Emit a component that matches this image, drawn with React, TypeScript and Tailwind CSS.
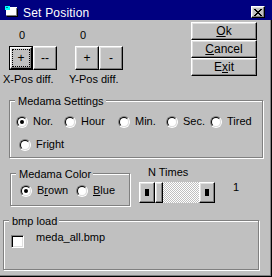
import React from "react";

type Kids = { className?: string; children?: React.ReactNode };

// classic raised 3d button face
function Raised({ className = "", children }: Kids) {
  return (
    <div
      className={`flex items-center justify-center bg-[#c0c0c0] border border-t-white border-l-white border-r-black border-b-black shadow-[inset_-1px_-1px_0_#808080,inset_1px_1px_0_#dfdfdf] ${className}`}
    >
      {children}
    </div>
  );
}

function Radio({ checked = false }: { checked?: boolean }) {
  return (
    <div className="mt-[1px] w-[12px] h-[12px] shrink-0 rounded-full border border-t-[#808080] border-l-[#808080] border-r-white border-b-white flex">
      <div className="flex-1 rounded-full border border-t-black border-l-black border-r-[#dfdfdf] border-b-[#dfdfdf] bg-white flex items-center justify-center">
        {checked && <div className="w-[4px] h-[4px] rounded-full bg-black" />}
      </div>
    </div>
  );
}

function Option({ label, checked, className = "" }: { label: React.ReactNode; checked?: boolean; className?: string }) {
  return (
    <div className={`flex items-start gap-[5px] h-[13px] ${className}`}>
      <Radio checked={checked} />
      <span>{label}</span>
    </div>
  );
}

function Group({ title, className = "", children }: Kids & { title: string }) {
  return (
    <div className={`relative border border-[#808080] shadow-[1px_1px_0_#fff,inset_1px_1px_0_#fff] ${className}`}>
      <span className="absolute left-[5px] top-[-6px] pl-[3px] pr-[2px] bg-[#c0c0c0]">{title}</span>
      {children}
    </div>
  );
}

function Arrow({ dir }: { dir: "left" | "right" }) {
  const rows = [0, 1, 2, 3];
  return (
    <svg width="4" height="7" viewBox="0 0 4 7" shapeRendering="crispEdges">
      {rows.map((i) => (
        <rect
          key={i}
          x={dir === "left" ? 3 - i : 0}
          y={3 - i}
          width={i + 1}
          height={2 * i + 1}
          fill="#000"
        />
      ))}
    </svg>
  );
}

function CloseGlyph() {
  const px = [
    "XX....XX",
    ".XX..XX.",
    "..XXXX..",
    "...XX...",
    "..XXXX..",
    ".XX..XX.",
    "XX....XX",
  ];
  return (
    <svg width="8" height="7" viewBox="0 0 8 7" shapeRendering="crispEdges">
      {px.flatMap((row, y) =>
        row.split("").map((c, x) => (c === "X" ? <rect key={`${x}-${y}`} x={x} y={y} width="1" height="1" fill="#000" /> : null))
      )}
    </svg>
  );
}

function TitleIcon() {
  return (
    <svg width="13" height="11" viewBox="0 0 13 11" shapeRendering="crispEdges" className="ml-[5px] mt-[6px] shrink-0">
      <rect x="1" y="1" width="11" height="9" fill="#fff" />
      <rect x="1" y="9" width="11" height="1" fill="#808080" />
      <rect x="11" y="2" width="1" height="8" fill="#808080" />
      <rect x="12" y="3" width="1" height="8" fill="#000" />
      <rect x="2" y="10" width="11" height="1" fill="#000" />
      <rect x="0" y="0" width="5" height="4" fill="#00ffff" />
      <rect x="1" y="1" width="2" height="1" fill="#008080" />
    </svg>
  );
}

export default function App() {
  return (
    <div className="w-[272px] h-[277px] bg-[#c0c0c0] flex flex-col text-[11px] leading-[13px] text-black font-['Liberation_Sans',Arial,sans-serif] shadow-[inset_-1px_-1px_0_#000,inset_-2px_-2px_0_#808080] overflow-hidden">
      {/* title bar */}
      <div className="h-[20px] bg-[#000080] flex items-start shrink-0">
        <TitleIcon />
        <span className="ml-[5px] mt-[6px] text-white text-[12px] leading-[14px] tracking-[0.2px]">Set Position</span>
        <Raised className="ml-auto mr-[7px] mt-[6px] w-[14px] h-[12px]">
          <CloseGlyph />
        </Raised>
      </div>

      {/* counters + dialog buttons */}
      <div className="flex">
        <div className="w-[191px]">
          <div className="flex mt-[9px] h-[13px]">
            <span className="ml-[19px] w-[61px]">0</span>
            <span>0</span>
          </div>
          <div className="flex mt-[4px] ml-[9px] text-[12px]">
            <div className="w-[24px] h-[24px] border border-black flex">
              <Raised className="flex-1 relative">
                <span className="absolute inset-[1px] border border-dotted border-black" />
                +
              </Raised>
            </div>
            <Raised className="w-[24px] h-[24px]">--</Raised>
            <Raised className="w-[24px] h-[24px] ml-[18px]">+</Raised>
            <Raised className="w-[24px] h-[24px]">-</Raised>
          </div>
          <div className="flex mt-[3px]">
            <span className="ml-[3px] w-[66px]">X-Pos diff.</span>
            <span>Y-Pos diff.</span>
          </div>
        </div>
        <div className="mt-[2px] w-[66px] flex flex-col text-[12px] leading-[14px]">
          <Raised className="h-[18px]">
            <span className="underline underline-offset-[1px]">O</span>k
          </Raised>
          <Raised className="h-[18px]">
            <span className="underline underline-offset-[1px]">C</span>ancel
          </Raised>
          <Raised className="h-[18px]">
            E<span className="underline underline-offset-[1px]">x</span>it
          </Raised>
        </div>
      </div>

      {/* medama settings */}
      <Group title="Medama Settings" className="ml-[9px] mt-[14px] w-[254px] h-[58px] shrink-0">
        <div className="flex mt-[14px] ml-[6px]">
          <Option label="Nor." checked className="w-[48px]" />
          <Option label="Hour" className="w-[54px]" />
          <Option label="Min." className="w-[48px]" />
          <Option label="Sec." className="w-[44px]" />
          <Option label="Tired" />
        </div>
        <div className="flex mt-[10px] ml-[9px]">
          <Option label="Fright" />
        </div>
      </Group>

      {/* color + n times */}
      <div className="flex items-start">
        <Group title="Medama Color" className="ml-[10px] mt-[15px] w-[120px] h-[33px] shrink-0">
          <div className="flex mt-[10px] ml-[9px]">
            <Option
              checked
              className="w-[56px]"
              label={
                <>
                  B<span className="underline underline-offset-[1px]">r</span>own
                </>
              }
            />
            <Option
              label={
                <>
                  <span className="underline underline-offset-[1px]">B</span>lue
                </>
              }
            />
          </div>
        </Group>
        <div className="ml-[9px] flex flex-col">
          <span className="ml-[9px] mt-[8px]">N Times</span>
          <div className="flex items-start mt-[3px]">
            <div className="flex h-[21px] w-[76px]">
              <Raised className="w-[16px] h-full">
                <Arrow dir="left" />
              </Raised>
              <Raised className="w-[8px] h-full" />
              <div className="flex-1 bg-[repeating-conic-gradient(#c0c0c0_0_25%,#fff_0_50%)] bg-[length:2px_2px]" />
              <Raised className="w-[16px] h-full">
                <Arrow dir="right" />
              </Raised>
            </div>
            <span className="ml-[18px] -mt-[1px]">1</span>
          </div>
        </div>
      </div>

      {/* bmp load */}
      <Group title="bmp load" className="ml-[3px] mt-[14px] w-[256px] h-[50px] shrink-0">
        <div className="flex items-start mt-[10px] ml-[7px]">
          <div className="mt-[4px] w-[13px] h-[13px] bg-white border border-t-[#808080] border-l-[#808080] border-r-white border-b-white shadow-[inset_1px_1px_0_#000,inset_-1px_-1px_0_#dfdfdf]" />
          <span className="ml-[12px]">meda_all.bmp</span>
        </div>
      </Group>
    </div>
  );
}
